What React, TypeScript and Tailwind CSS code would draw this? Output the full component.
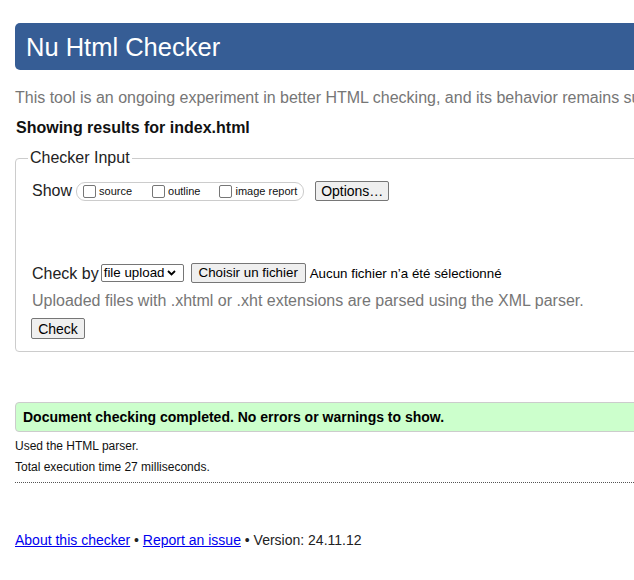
import React from "react";

const Box = () => (
  <span className="inline-block w-[13px] h-[13px] border border-[#767676] rounded-[2px] bg-white shrink-0" />
);

export default function App() {
  return (
    <div className="w-full overflow-hidden bg-white min-h-[580px]" style={{ fontFamily: '"Liberation Sans", Arial, sans-serif' }}>
      <div className="w-[1000px] pl-[15px] text-[#111]">
        <div className="mt-[23px] h-[47px] rounded-[5px] bg-[#365d95] flex items-center pl-[11px]">
          <h1 className="text-white text-[25.5px] leading-[30px] font-normal">Nu Html Checker</h1>
        </div>
        <p className="mt-[19px] text-[16px] leading-[18px] text-[#767676] whitespace-nowrap">
          This tool is an ongoing experiment in better HTML checking, and its behavior remains subject to change
        </p>
        <p className="mt-[12px] text-[16px] leading-[18px] font-bold pl-[1px]">Showing results for index.html</p>

        <fieldset className="mt-[12px] border border-[#cccccc] rounded-[4px] pl-[15px] pt-[14px] pb-[12px]">
          <legend className="ml-[-3px] px-[2px] text-[16px] leading-[18px] text-[#222]">Checker Input</legend>
          <div className="h-[20px] flex items-center">
            <span className="text-[16px] leading-[18px] text-[#222] ml-[1px]">Show</span>
            <div className="ml-[4px] h-[19px] border border-[#cccccc] rounded-[9px] flex items-center pl-[6px] pr-[6px] text-[11px] text-[#111]">
              <Box />
              <span className="ml-[3px]">source</span>
              <span className="ml-[20px] flex items-center"><Box /></span>
              <span className="ml-[3px]">outline</span>
              <span className="ml-[19px] flex items-center"><Box /></span>
              <span className="ml-[3px]">image report</span>
            </div>
            <button className="ml-[11px] h-[20px] w-[74px] bg-[#efefef] border border-[#767676] rounded-[2px] text-[14px] leading-[18px] text-black">
              Options…
            </button>
          </div>

          <div className="mt-[62px] h-[20px] flex items-center">
            <span className="text-[16px] leading-[18px] pt-[2px] text-[#222] ml-[1px]">Check by</span>
            <div className="ml-[2px] h-[18px] w-[83px] border border-[#767676] rounded-[2px] bg-white flex items-center pl-[2px] text-[13.33px] text-black">
              <span>file upload</span>
              <svg className="ml-[3px]" width="9" height="6" viewBox="0 0 9 6">
                <polyline points="1,1 4.5,4.5 8,1" fill="none" stroke="#000" strokeWidth="1.8" />
              </svg>
            </div>
            <button className="ml-[7px] h-[20px] w-[115px] bg-[#efefef] border border-[#767676] rounded-[2px] text-[13.33px] leading-[18px] text-black">
              Choisir un fichier
            </button>
            <span className="ml-[4px] pt-[1px] text-[13.33px] text-black">Aucun fichier n’a été sélectionné</span>
          </div>

          <p className="mt-[9px] text-[16px] leading-[18px] text-[#767676] ml-[1px]">
            Uploaded files with .xhtml or .xht extensions are parsed using the XML parser.
          </p>

          <button className="mt-[8px] h-[21px] w-[54px] bg-[#efefef] border border-[#767676] rounded-[2px] text-[14px] leading-[18px] text-black block">
            Check
          </button>
        </fieldset>

        <div className="mt-[50px] h-[30px] border border-[#cccccc] rounded-[4px] bg-[#ccffcc] flex items-center pl-[7px]">
          <span className="text-[14px] font-bold text-black">Document checking completed. No errors or warnings to show.</span>
        </div>
        <p className="mt-[5px] text-[12px] leading-[18px] text-[#111]">Used the HTML parser.</p>
        <p className="mt-[3px] text-[12px] leading-[18px] text-[#111]">Total execution time 27 milliseconds.</p>
        <div className="mt-[6px] border-t border-dotted border-[#555]" />
        <p className="mt-[48px] text-[14px] leading-[18px] text-[#222]">
          <a href="#" className="text-[#0000ee] underline">About this checker</a>
          {" • "}
          <a href="#" className="text-[#0000ee] underline">Report an issue</a>
          {" • Version: 24.11.12"}
        </p>
      </div>
    </div>
  );
}
